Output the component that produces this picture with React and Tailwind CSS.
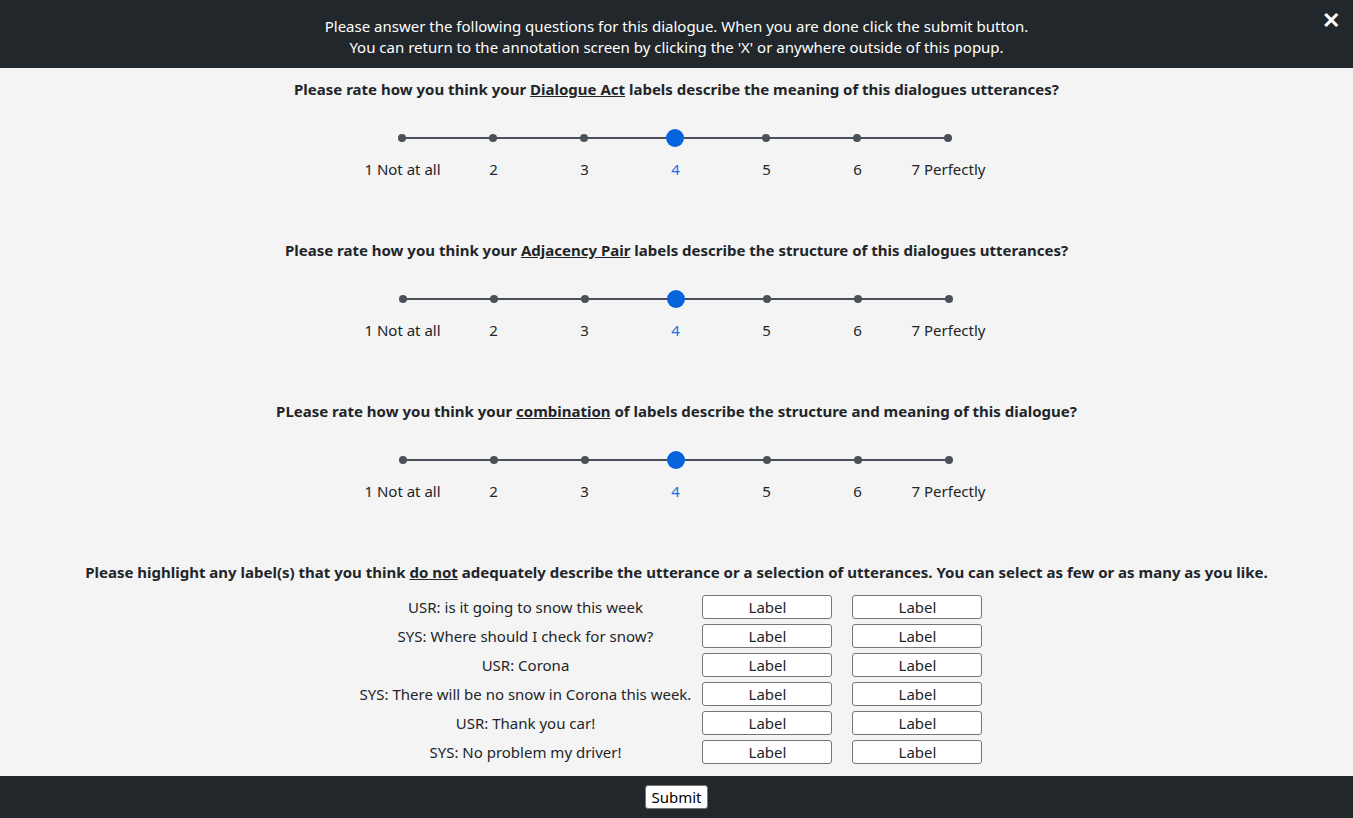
import React from "react";

const labels = ["1 Not at all", "2", "3", "4", "5", "6", "7 Perfectly"];

function Scale({ value = 4 }) {
  return (
    <div className="flex flex-col items-center ml-[-2px]">
      <div className="relative grid grid-cols-7 w-[637px] h-[18px]">
        <div className="absolute left-[45px] right-[45px] top-1/2 h-[2px] -translate-y-1/2 bg-[#495057]" />
        {labels.map((l, i) => (
          <div key={i} className="relative flex items-center justify-center">
            {i + 1 === value ? (
              <div className="w-[18px] h-[18px] rounded-full bg-[#0563db]" />
            ) : (
              <div className="w-[8px] h-[8px] rounded-full bg-[#495057]" />
            )}
          </div>
        ))}
      </div>
      <div className="grid grid-cols-7 w-[637px] mt-[12px]">
        {labels.map((l, i) => (
          <div
            key={i}
            className={`text-center whitespace-nowrap text-[15px] leading-[20px] ${i + 1 === value ? "text-[#1a6fe0]" : "text-[#212529]"}`}
          >
            {l}
          </div>
        ))}
      </div>
    </div>
  );
}

const rows = [
  "USR: is it going to snow this week",
  "SYS: Where should I check for snow?",
  "USR: Corona",
  "SYS: There will be no snow in Corona this week.",
  "USR: Thank you car!",
  "SYS: No problem my driver!",
];

export default function App() {
  return (
    <div
      className="w-[1353px] h-[818px] flex flex-col bg-[#f4f4f4] text-[#212529] overflow-hidden"
      style={{ fontFamily: '"Segoe UI", "Noto Sans", sans-serif' }}
    >
      <header className="relative h-[68px] shrink-0 bg-[#22272b] text-white flex flex-col items-center justify-center text-[15px] leading-[21px] pt-[6px]">
        <div>Please answer the following questions for this dialogue. When you are done click the submit button.</div>
        <div>You can return to the annotation screen by clicking the 'X' or anywhere outside of this popup.</div>
        <button className="absolute right-[13px] top-[8px] text-white text-[22px] font-bold leading-none">✕</button>
      </header>

      <main className="flex-1 flex flex-col items-center">
        {[
          <>Please rate how you think your <u>Dialogue Act</u> labels describe the meaning of this dialogues utterances?</>,
          <>Please rate how you think your <u>Adjacency Pair</u> labels describe the structure of this dialogues utterances?</>,
          <>PLease rate how you think your <u>combination</u> of labels describe the structure and meaning of this dialogue?</>,
        ].map((q, i) => (
          <section key={i} className="flex flex-col items-center h-[161px] pt-[11px]">
            <div className="font-bold text-[15px] leading-[21px] mb-[29px]">{q}</div>
            <Scale />
          </section>
        ))}
        <section className="flex flex-col items-center pt-[11px]">
          <div className="font-bold text-[15px] leading-[21px] mb-[12px]">
            Please highlight any label(s) that you think <u>do not</u> adequately describe the utterance or a selection of utterances. You can select as few or as many as you like.
          </div>
          <div className="flex flex-col gap-[5px] ml-[-22px]">
            {rows.map((r) => (
              <div key={r} className="flex items-center">
                <div className="w-[354px] text-center text-[15px] leading-[20px] whitespace-nowrap">{r}</div>
                <button className="w-[130px] h-[24px] border border-[#767676] rounded-[3px] bg-white text-[15px] leading-[20px]">Label</button>
                <button className="w-[130px] h-[24px] ml-[20px] border border-[#767676] rounded-[3px] bg-white text-[15px] leading-[20px]">Label</button>
              </div>
            ))}
          </div>
        </section>
      </main>

      <footer className="h-[42px] shrink-0 bg-[#22272b] flex items-center justify-center">
        <button className="h-[24px] px-[5px] bg-white rounded-[3px] border border-[#767676] text-[15px] leading-[20px] text-black">Submit</button>
      </footer>
    </div>
  );
}
